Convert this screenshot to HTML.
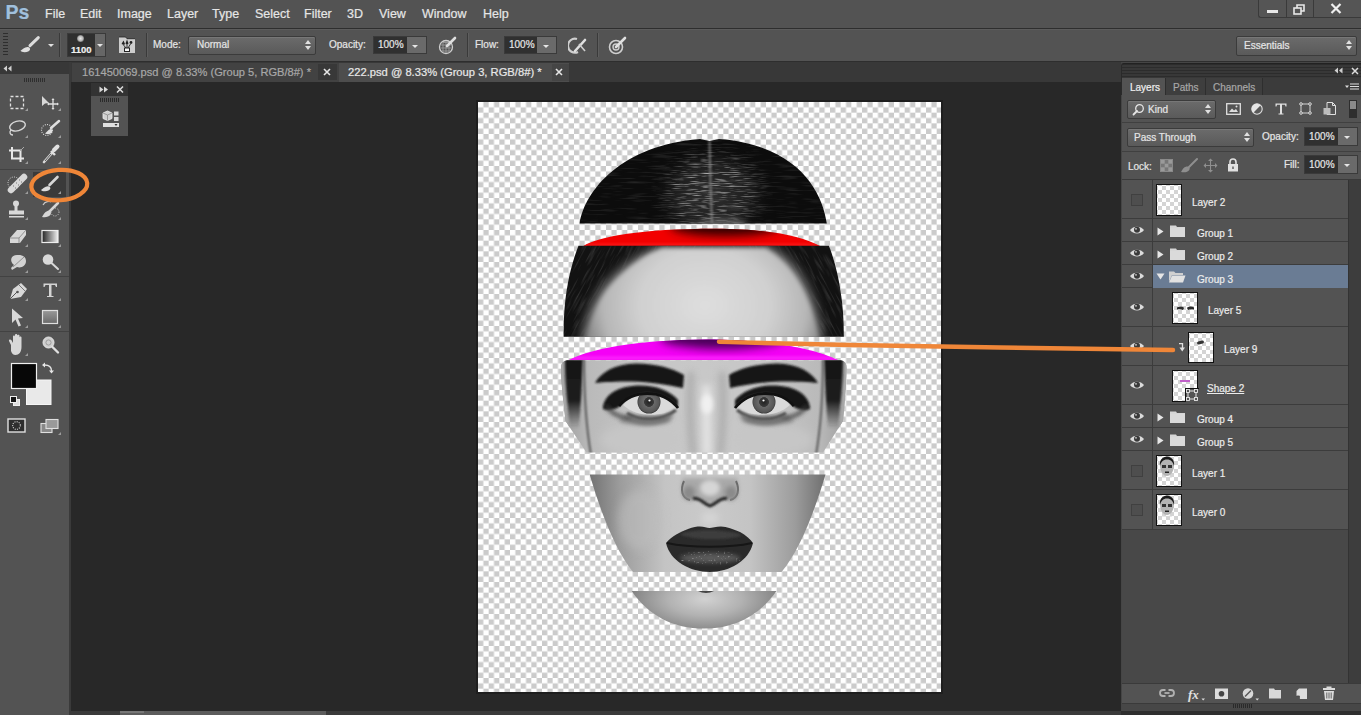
<!DOCTYPE html>
<html><head><meta charset="utf-8">
<style>
*{margin:0;padding:0;box-sizing:border-box}
html,body{width:1361px;height:715px;overflow:hidden;background:#282828;font-family:"Liberation Sans",sans-serif;color:#e8e8e8;position:relative}
.a{position:absolute}
.t{position:absolute;white-space:nowrap;line-height:1;-webkit-text-stroke:0.2px currentColor}
#menubar{left:0;top:0;width:1361px;height:29px;background:#535353;border-bottom:1px solid #2e2e2e}
#opts{left:0;top:29px;width:1361px;height:33px;background:#535353;border-bottom:1px solid #2e2e2e;border-top:1px solid #5c5c5c}
#tools{left:0;top:62px;width:69px;height:653px;background:#535353}
#toolshead{left:0;top:62px;width:69px;height:12px;background:#383838}
#tabbar{left:70px;top:62px;width:1051px;height:20px;background:#383838}
#panel{left:1121px;top:62px;width:240px;height:653px;background:#454545}
.opt{font-size:10px;color:#e6e6e6}
.dd{background:linear-gradient(#6b6b6b,#5a5a5a);border:1px solid #3b3b3b;border-radius:2px;box-shadow:inset 0 1px 0 #777}
.arr{width:7px;height:11px;background:linear-gradient(#e0e0e0,#e0e0e0) no-repeat;background:none}
.arr:before{content:"";position:absolute;left:0;top:0;border-left:3.5px solid transparent;border-right:3.5px solid transparent;border-bottom:4px solid #e0e0e0}
.arr:after{content:"";position:absolute;left:0;top:6px;border-left:3.5px solid transparent;border-right:3.5px solid transparent;border-top:4px solid #e0e0e0}
.numbox{height:18px;background:linear-gradient(90deg,#303030 0,#303030 calc(100% - 19px),#6a6a6a calc(100% - 19px));border:1px solid #3a3a3a}
.dda{width:0;height:0;border-left:3.5px solid transparent;border-right:3.5px solid transparent;border-top:3.5px solid #e6e6e6}
.lname{font-size:10px;color:#ececec}
.thumb{border:1px solid #111;background-color:#fff;background-image:conic-gradient(#d4d4d4 25%,#fff 0 50%,#d4d4d4 0 75%,#fff 0);background-size:8px 8px;background-position:1px 1px}
.menu{font-size:12.5px;color:#e6e6e6;top:8px}
</style></head>
<body>
<div id="menubar" class="a"></div>
<div id="opts" class="a"></div>
<div id="tools" class="a"></div>
<div id="toolshead" class="a"></div>
<div id="tabbar" class="a"></div>
<div id="panel" class="a"></div>

<!-- menu -->
<div class="t" style="left:5.5px;top:3px;font-size:19.5px;font-weight:bold;color:#a2c0dc;text-shadow:0 0 1px #3a5a7a">Ps</div>
<div class="t menu" style="left:45px">File</div>
<div class="t menu" style="left:80px">Edit</div>
<div class="t menu" style="left:117px">Image</div>
<div class="t menu" style="left:167px">Layer</div>
<div class="t menu" style="left:212px">Type</div>
<div class="t menu" style="left:255px">Select</div>
<div class="t menu" style="left:304px">Filter</div>
<div class="t menu" style="left:347px">3D</div>
<div class="t menu" style="left:379px">View</div>
<div class="t menu" style="left:422px">Window</div>
<div class="t menu" style="left:483px">Help</div>


<!-- options bar -->
<div class="a" style="left:3px;top:33px;width:5px;height:23px;background:repeating-linear-gradient(#2e2e2e 0 1px,transparent 1px 3px)"></div>
<svg class="a" style="left:14px;top:32px" width="30" height="24" viewBox="14 32 30 24">
<path d="M30 45.6 L38.3 37.6" stroke="#dcdcdc" stroke-width="3" stroke-linecap="round"/>
<path d="M20.5 50.8 C22 49.5 24.5 47.5 27.5 47 C29 46.8 30.2 47.8 30 49.5 C29.5 51.5 27 52.3 24.5 52.2 C22.5 52.1 21 51.6 20.5 50.8Z" fill="#e0e0e0"/>
</svg>
<div class="a" style="left:48px;top:44px;width:0;height:0;border-left:3px solid transparent;border-right:3px solid transparent;border-top:3px solid #e0e0e0"></div>
<div class="a" style="left:59px;top:33px;width:1px;height:24px;background:#3a3a3a;box-shadow:1px 0 0 #5e5e5e"></div>
<div class="a" style="left:67px;top:33px;width:39px;height:24px;background:#2f2f2f;border:1px solid #3a3a3a"></div>
<div class="a" style="left:95px;top:34px;width:10px;height:22px;background:#666"></div>
<div class="a" style="left:97px;top:44px;width:0;height:0;border-left:3px solid transparent;border-right:3px solid transparent;border-top:3px solid #e6e6e6"></div>
<div class="a" style="left:77px;top:35px;width:7px;height:7px;border-radius:50%;background:radial-gradient(#e8e8e8 0,#bbb 45%,rgba(80,80,80,0) 100%)"></div>
<div class="t" style="left:71px;top:45px;font-size:9.5px;font-weight:bold;color:#f0f0f0">1100</div>
<svg class="a" style="left:118px;top:36px" width="18" height="18" viewBox="0 0 18 18">
<path d="M1 1 H7.5 L9 2.7 H17 V17 H1Z" fill="#cdcdcd"/>
<path d="M1 1 H7.5 L9 2.7 H17" fill="none" stroke="#222" stroke-width="0.8"/>
<path d="M3.5 8 L5.5 4.5 L7 8 L6 9Z M7.5 7.5 L9 3.5 L10.5 7.5 L9 9Z" fill="#222"/>
<circle cx="13" cy="6.5" r="1.4" fill="#222"/>
<path d="M5.5 9 L8 12 M9 9 V12 M12.5 8 L10 12" stroke="#333" stroke-width="1"/>
<rect x="6.5" y="12" width="5" height="3.5" fill="#f4f4f4" stroke="#222" stroke-width="1"/>
</svg>
<div class="a" style="left:146px;top:33px;width:1px;height:24px;background:#3a3a3a;box-shadow:1px 0 0 #5e5e5e"></div>
<div class="t opt" style="left:153px;top:40px">Mode:</div>
<div class="a dd" style="left:188px;top:36px;width:128px;height:19px"></div>
<div class="t opt" style="left:197px;top:40px">Normal</div>
<div class="a arr" style="left:305px;top:40px"></div>
<div class="t opt" style="left:329px;top:40px">Opacity:</div>
<div class="a numbox" style="left:373px;top:36px;width:54px"></div>
<div class="t opt" style="left:378px;top:40px">100%</div>
<div class="a dda" style="left:412px;top:45px"></div>
<svg class="a" style="left:438px;top:35px" width="20" height="20" viewBox="0 0 20 20">
<circle cx="8" cy="12" r="6.5" fill="none" stroke="#cfcfcf" stroke-width="1.3"/>
<path d="M3 10 L13 10 M2.5 13 L13.5 13 M5 7.5 L11 7.5 M4 16 L12 16 M5 7 L5 17 M8 6 L8 18 M11 7 L11 17" stroke="#9a9a9a" stroke-width="0.9"/>
<path d="M9 11 L17 3" stroke="#dedede" stroke-width="2.6" stroke-linecap="round"/>
</svg>
<div class="a" style="left:467px;top:33px;width:1px;height:24px;background:#3a3a3a;box-shadow:1px 0 0 #5e5e5e"></div>
<div class="t opt" style="left:475px;top:40px">Flow:</div>
<div class="a numbox" style="left:504px;top:36px;width:53px"></div>
<div class="t opt" style="left:509px;top:40px">100%</div>
<div class="a dda" style="left:543px;top:45px"></div>
<svg class="a" style="left:568px;top:35px" width="22" height="20" viewBox="0 0 22 20">
<path d="M9 4 A7 7 0 1 0 10 17" fill="none" stroke="#cfcfcf" stroke-width="2.2"/>
<path d="M7 16 L17 5" stroke="#e0e0e0" stroke-width="2.6" stroke-linecap="round"/>
<path d="M11 9 L17 16" stroke="#cfcfcf" stroke-width="1.6"/>
</svg>
<div class="a" style="left:597px;top:33px;width:1px;height:24px;background:#3a3a3a;box-shadow:1px 0 0 #5e5e5e"></div>
<svg class="a" style="left:607px;top:35px" width="22" height="20" viewBox="0 0 22 20">
<circle cx="9" cy="12" r="6.5" fill="none" stroke="#cfcfcf" stroke-width="1.6"/>
<circle cx="9" cy="12" r="3" fill="none" stroke="#cfcfcf" stroke-width="1.4"/>
<path d="M9 12 L18 3" stroke="#e0e0e0" stroke-width="2.6" stroke-linecap="round"/>
</svg>
<div class="a dd" style="left:1236px;top:36px;width:121px;height:20px"></div>
<div class="t opt" style="left:1244px;top:41px">Essentials</div>
<div class="a arr" style="left:1346px;top:40px"></div>
<!-- window buttons -->
<div class="a" style="left:1258px;top:0;width:103px;height:18px;background:#555;border-left:1px solid #3a3a3a;border-bottom:1px solid #3a3a3a;border-radius:0 0 0 3px"></div>
<div class="a" style="left:1286px;top:0;width:1px;height:18px;background:#3a3a3a"></div>
<div class="a" style="left:1313px;top:0;width:1px;height:18px;background:#3a3a3a"></div>
<div class="a" style="left:1267px;top:10px;width:11px;height:3px;background:#e8e8e8"></div>
<svg class="a" style="left:1293px;top:4px" width="14" height="11" viewBox="0 0 14 11"><rect x="1" y="4" width="7" height="6" fill="none" stroke="#e8e8e8" stroke-width="1.6"/><path d="M4 4 V1 H11 V7 H8" fill="none" stroke="#e8e8e8" stroke-width="1.6"/></svg>
<svg class="a" style="left:1330px;top:3px" width="12" height="11" viewBox="0 0 12 11"><path d="M1.5 1 L10.5 10 M10.5 1 L1.5 10" stroke="#efefef" stroke-width="2.2"/></svg>

<!-- tab bar -->
<div class="a" style="left:72px;top:63px;width:267px;height:19px;background:#424242"></div>
<div class="t" style="left:82px;top:67px;font-size:11.1px;color:#a8a8a8">161450069.psd @ 8.33% (Group 5, RGB/8#) *</div>
<div class="a" style="left:318px;top:64px;width:19px;height:16px;background:#383838"></div>
<svg class="a" style="left:323px;top:68px" width="8" height="8" viewBox="0 0 8 8"><path d="M1 1L7 7M7 1L1 7" stroke="#e6e6e6" stroke-width="1.6"/></svg>
<div class="a" style="left:339px;top:63px;width:230px;height:19px;background:#4d4d4d"></div>
<div class="t" style="left:348px;top:67px;font-size:11.2px;color:#e8e8e8">222.psd @ 8.33% (Group 3, RGB/8#) *</div>
<div class="a" style="left:552px;top:64px;width:17px;height:17px;background:#454545"></div><svg class="a" style="left:555px;top:68px" width="8" height="8" viewBox="0 0 8 8"><path d="M1 1L7 7M7 1L1 7" stroke="#e6e6e6" stroke-width="1.6"/></svg>


<!-- tools panel -->
<div class="a" style="left:69px;top:62px;width:2px;height:653px;background:#3a3a3a"></div>
<svg class="a" style="left:3px;top:65px" width="9" height="7" viewBox="0 0 9 7"><path d="M4 0.5 L0.5 3.5 L4 6.5Z M8.5 0.5 L5 3.5 L8.5 6.5Z" fill="#d0d0d0"/></svg>
<div class="a" style="left:24px;top:78px;width:21px;height:4px;background:repeating-linear-gradient(90deg,#2e2e2e 0 1px,transparent 1px 2px)"></div>
<div class="a" style="left:33px;top:172px;width:33px;height:25px;background:#3a3a3a"></div>
<svg class="a" style="left:0;top:85px" width="69" height="360" viewBox="0 85 69 360">
<g fill="#9c9c9c">
<path d="M28 108 L28 111 L25 111Z"/><path d="M61 108 L61 111 L58 111Z"/>
<path d="M28 135 L28 138 L25 138Z"/><path d="M61 135 L61 138 L58 138Z"/>
<path d="M28 161 L28 164 L25 164Z"/><path d="M61 161 L61 164 L58 164Z"/>
<path d="M28 191 L28 194 L25 194Z"/><path d="M61 191 L61 194 L58 194Z"/>
<path d="M28 217 L28 220 L25 220Z"/><path d="M61 217 L61 220 L58 220Z"/>
<path d="M28 244 L28 247 L25 247Z"/><path d="M61 244 L61 247 L58 247Z"/>
<path d="M28 270 L28 273 L25 273Z"/><path d="M61 270 L61 273 L58 273Z"/>
<path d="M28 298 L28 301 L25 301Z"/><path d="M61 298 L61 301 L58 301Z"/>
<path d="M28 325 L28 328 L25 328Z"/><path d="M61 325 L61 328 L58 328Z"/>
<path d="M28 353 L28 356 L25 356Z"/>
<path d="M61 432 L61 435 L58 435Z"/>
</g>
<!-- marquee -->
<rect x="10.5" y="96.5" width="13" height="12" fill="none" stroke="#e0e0e0" stroke-width="1.3" stroke-dasharray="3 2"/>
<!-- move -->
<path d="M42 96 L42 106 L45 103.5 L49 103 Z" fill="#d8d8d8"/>
<path d="M53 99 V109 M48 104 H58" stroke="#e0e0e0" stroke-width="1.3"/>
<path d="M53 98 L51.5 100 H54.5Z M53 110 L51.5 108 H54.5Z M47 104 L49 102.5 V105.5Z M59 104 L57 102.5 V105.5Z" fill="#e0e0e0"/>
<!-- lasso -->
<ellipse cx="17.5" cy="126" rx="8" ry="4.8" transform="rotate(-15 17.5 126)" fill="none" stroke="#d8d8d8" stroke-width="1.4"/>
<path d="M11 130 C9 132 10 135 13 135" fill="none" stroke="#d8d8d8" stroke-width="1.3"/>
<!-- quick select -->
<circle cx="47" cy="130" r="5.5" fill="none" stroke="#d8d8d8" stroke-width="1.1" stroke-dasharray="1 1.3"/>
<path d="M51 128 L59 121" stroke="#e0e0e0" stroke-width="2.5" stroke-linecap="round"/>
<path d="M45 133.5 C47 132 48 129.5 50.5 129 C52.5 129 53 131 52 132.5 C50 134.5 47.5 134.5 45 133.5Z" fill="#e0e0e0"/>
<!-- crop -->
<path d="M12 147 V158.5 H24 M9 150.5 H20.5 V162" fill="none" stroke="#e6e6e6" stroke-width="2"/>
<path d="M20 151 L24 147" stroke="#aaa" stroke-width="1"/>
<!-- eyedropper -->
<path d="M44 162 L52 153" stroke="#d8d8d8" stroke-width="2.6" stroke-linecap="round"/>
<path d="M45 161 L51 154" stroke="#555" stroke-width="1"/>
<path d="M51 151 L55 155" stroke="#e0e0e0" stroke-width="2.4"/>
<path d="M54 150 L57.5 146.5" stroke="#e0e0e0" stroke-width="4" stroke-linecap="round"/>
<!-- separator -->
<rect x="0" y="169" width="69" height="1" fill="#424242"/>
<!-- healing -->
<circle cx="14" cy="183" r="6" fill="none" stroke="#d8d8d8" stroke-width="1" stroke-dasharray="1 1.3"/>
<path d="M11 190 L24 177" stroke="#d8d8d8" stroke-width="6.5" stroke-linecap="round"/>
<path d="M13 186 h1 M16 183 h1 M19 180 h1 M15 188 h1 M18 185 h1 M21 182 h1" stroke="#777" stroke-width="1"/>
<!-- brush selected -->
<path d="M49.5 185 L57.5 177" stroke="#d6d6d6" stroke-width="2.6" stroke-linecap="round"/>
<path d="M41 190 C42.5 188.7 45 186.6 47.8 186.2 C49.3 186 50.5 187 50.3 188.6 C49.8 190.6 47.3 191.4 44.8 191.3 C42.8 191.2 41.5 190.8 41 190Z" fill="#dcdcdc"/>
<!-- stamp -->
<circle cx="16" cy="203.5" r="3" fill="#d8d8d8"/>
<rect x="14.5" y="205" width="3" height="6" fill="#d8d8d8"/>
<rect x="9" y="210.5" width="15" height="4" fill="#d8d8d8"/>
<rect x="9" y="216" width="15" height="1.5" fill="#d8d8d8"/>
<!-- history brush -->
<path d="M43 205 C45 201 50 201 51 202" fill="none" stroke="#ccc" stroke-width="1.2"/>
<path d="M49 212 L58 203" stroke="#d6d6d6" stroke-width="2.5" stroke-linecap="round"/>
<path d="M42 217 C43.5 214.5 44.5 212 47.5 211 C50 210.3 51.8 212.3 50.6 214.6 C49 217 45.5 217.6 42 217Z" fill="#d6d6d6"/>
<circle cx="55" cy="212" r="4" fill="none" stroke="#ccc" stroke-width="1" stroke-dasharray="1 1.3"/>
<!-- eraser -->
<path d="M10 238 L17 230 H26 L26 235 L20 243 H10Z" fill="#d8d8d8"/>
<path d="M10 238 H19 L26 230 M19 238 V243" stroke="#8a8a8a" stroke-width="0.9" fill="none"/>
<!-- gradient -->
<defs><linearGradient id="gr" x1="0" x2="1"><stop offset="0" stop-color="#222"/><stop offset="1" stop-color="#f0f0f0"/></linearGradient>
<linearGradient id="gr2" x1="0" x2="0" y1="0" y2="1"><stop offset="0" stop-color="#999"/><stop offset="1" stop-color="#6a6a6a"/></linearGradient></defs>
<rect x="42" y="230.5" width="16" height="12" fill="url(#gr)" stroke="#eee" stroke-width="1.2"/>
<!-- blur -->
<path d="M17 255 C23 254.5 26 257 26 261 C26 266 21 268.5 17 267 L12 270 L11 268 L14 265 C9 261 11 255 17 255Z" fill="#d2d2d2"/>
<path d="M13 267 L24 257" stroke="#888" stroke-width="0.9"/>
<!-- dodge -->
<circle cx="48" cy="259.5" r="5.3" fill="#d8d8d8"/>
<path d="M51.5 263 L58 269" stroke="#d8d8d8" stroke-width="2" stroke-linecap="round"/>
<rect x="0" y="276" width="69" height="1" fill="#424242"/>
<!-- pen -->
<path d="M10 299 L13 289 L21 283 L27 289 L21 297Z" fill="#d8d8d8"/>
<path d="M10 299 L17 292" stroke="#555" stroke-width="1"/>
<circle cx="17.5" cy="292" r="1.3" fill="#555"/>
<path d="M19 285 L25 291" stroke="#777" stroke-width="1"/>
<!-- type -->
<path d="M43.5 283.5 H57 V287 H56 L55 285 H51.5 V296 H53.5 V297 H47 V296 H49 V285 H45.5 L44.5 287 H43.5Z" fill="#d4d4d4"/>
<!-- path select -->
<path d="M12 308.5 L12 323 L15.5 319.5 L18.5 326.5 L21 325.5 L18 318.5 L23 318 Z" fill="#d8d8d8"/>
<!-- rect -->
<rect x="42.5" y="310.5" width="15" height="13" fill="url(#gr2)" stroke="#e0e0e0" stroke-width="1.2"/>
<rect x="0" y="331" width="69" height="1" fill="#424242"/>
<!-- hand -->
<path d="M11 345 L9 341 C8.5 339.5 10.5 338.8 11.5 340.3 L13 343 V336.5 C13 335 15 335 15 336.5 V342 V335 C15 333.5 17.3 333.5 17.3 335 V342 V335.8 C17.3 334.5 19.5 334.5 19.5 335.8 V342 V337.5 C19.5 336 21.5 336 21.5 337.5 V347 C21.5 352 19 355 15.5 355 C13 355 12 353.5 11 351Z" fill="#d8d8d8"/>
<!-- zoom -->
<circle cx="48.5" cy="342.5" r="5.5" fill="#cfcfcf" stroke="#e6e6e6" stroke-width="1"/>
<circle cx="48.5" cy="342.5" r="2.6" fill="none" stroke="#9c9c9c" stroke-width="1"/>
<path d="M52.5 347 L58 352.5" stroke="#e0e0e0" stroke-width="2.4" stroke-linecap="round"/>
<!-- colors -->
<rect x="26.5" y="380" width="24.5" height="24.5" fill="#e9e9e9" stroke="#f5f5f5" stroke-width="1"/>
<rect x="11.5" y="363.5" width="25" height="25" fill="#070707" stroke="#f0f0f0" stroke-width="1.2"/>
<path d="M44.5 365 C49 365 51.5 367 51.5 371" fill="none" stroke="#e6e6e6" stroke-width="1.3"/>
<path d="M42 365 L45 362.5 V367.5Z M51.5 373.5 L49 370.5 H54Z" fill="#e6e6e6"/>
<rect x="13.5" y="399.5" width="6" height="6" fill="#ddd" stroke="#eee" stroke-width="1"/>
<rect x="10.5" y="396.5" width="6" height="6" fill="#151515" stroke="#eee" stroke-width="1"/>
<!-- quick mask -->
<rect x="8" y="419" width="17" height="13" fill="#2e2e2e" stroke="#e0e0e0" stroke-width="1.4"/>
<circle cx="16.5" cy="425.5" r="3.8" fill="none" stroke="#e0e0e0" stroke-width="1.1" stroke-dasharray="1 1.2"/>
<!-- screen mode -->
<rect x="41" y="423.5" width="11" height="9" fill="#888" stroke="#e0e0e0" stroke-width="1.1"/>
<rect x="46" y="419.5" width="12" height="9" fill="#9a9a9a" stroke="#e0e0e0" stroke-width="1.1"/>
</svg>
<!-- orange ellipse -->
<svg class="a" style="left:25px;top:163px" width="70" height="45" viewBox="25 163 70 45">
<ellipse cx="59.3" cy="185.1" rx="28" ry="15.2" transform="rotate(-4 59.3 185.1)" fill="none" stroke="#ef8638" stroke-width="4.2"/>
</svg>


<!-- right panel -->
<div class="a" style="left:1121px;top:63px;width:240px;height:15px;background:repeating-linear-gradient(#2c2c2c 0 1px,#383838 1px 3px);border-top:1px solid #222;border-left:1px solid #2a2a2a;border-radius:3px 0 0 0"></div>
<svg class="a" style="left:1334px;top:67px" width="9" height="7" viewBox="0 0 9 7"><path d="M4 0.5 L0.5 3.5 L4 6.5Z M8.5 0.5 L5 3.5 L8.5 6.5Z" fill="#cfcfcf"/></svg>
<svg class="a" style="left:1351px;top:67px" width="8" height="8" viewBox="0 0 8 8"><path d="M1 1L7 7M7 1L1 7" stroke="#dcdcdc" stroke-width="1.5"/></svg>
<div class="a" style="left:1121px;top:78px;width:240px;height:17px;background:#3b3b3b;border-left:1px solid #2a2a2a"></div>
<div class="a" style="left:1122px;top:78px;width:43px;height:17px;background:#535353"></div>
<div class="a" style="left:1165px;top:78px;width:41px;height:17px;background:#3e3e3e;border-left:1px solid #2e2e2e;border-right:1px solid #2e2e2e"></div>
<div class="a" style="left:1206px;top:78px;width:57px;height:17px;background:#3e3e3e;border-right:1px solid #2e2e2e"></div>
<div class="t" style="left:1130px;top:82.5px;font-size:10px;color:#f0f0f0">Layers</div>
<div class="t" style="left:1173px;top:82.5px;font-size:10px;color:#a8a8a8">Paths</div>
<div class="t" style="left:1213px;top:82.5px;font-size:10px;color:#a8a8a8">Channels</div>
<svg class="a" style="left:1345px;top:83px" width="14" height="8" viewBox="0 0 14 8"><path d="M0 2.5 H4 L2 5Z" fill="#ddd"/><path d="M5 1 H14 M5 3.5 H14 M5 6 H14" stroke="#ddd" stroke-width="1.1"/></svg>
<div class="a" style="left:1122px;top:95px;width:239px;height:620px;background:#535353"></div>
<!-- filter row -->
<div class="a dd" style="left:1127px;top:100px;width:89px;height:19px"></div>
<svg class="a" style="left:1132px;top:103px" width="13" height="13" viewBox="0 0 13 13"><circle cx="7.5" cy="5.5" r="3.8" fill="none" stroke="#e6e6e6" stroke-width="1.3"/><path d="M5 8 L1.5 11.5" stroke="#e6e6e6" stroke-width="1.8" stroke-linecap="round"/></svg>
<div class="t opt" style="left:1148px;top:105px">Kind</div>
<div class="a arr" style="left:1205px;top:104px"></div>
<svg class="a" style="left:1226px;top:103px" width="15" height="12" viewBox="0 0 15 12"><rect x="0.7" y="0.7" width="13.6" height="10.6" fill="none" stroke="#e0e0e0" stroke-width="1.3"/><path d="M3 9 L6 5.5 L8 7.5 L10 6 L12 9Z" fill="#e0e0e0"/><circle cx="10.5" cy="3.5" r="1" fill="#e0e0e0"/></svg>
<svg class="a" style="left:1251px;top:103px" width="12" height="12" viewBox="0 0 12 12"><circle cx="6" cy="6" r="5.2" fill="#5a5a5a" stroke="#e0e0e0" stroke-width="1.1"/><path d="M6 0.8 A5.2 5.2 0 0 0 2.3 9.7 L9.7 2.3 A5.2 5.2 0 0 0 6 0.8Z" fill="#e6e6e6"/></svg>
<svg class="a" style="left:1275px;top:103px" width="12" height="12" viewBox="0 0 12 12"><path d="M0.5 0.5 H11.5 V3.5 H10.5 L10 1.7 H7 V10.5 H8.5 V11.5 H3.5 V10.5 H5 V1.7 H2 L1.5 3.5 H0.5Z" fill="#e0e0e0"/></svg>
<svg class="a" style="left:1299px;top:102px" width="13" height="13" viewBox="0 0 13 13"><rect x="2" y="2" width="9" height="9" fill="none" stroke="#e0e0e0" stroke-width="0.9"/><g fill="#535353" stroke="#e6e6e6" stroke-width="0.9"><circle cx="2" cy="2" r="1.3"/><circle cx="11" cy="2" r="1.3"/><circle cx="2" cy="11" r="1.3"/><circle cx="11" cy="11" r="1.3"/></g></svg>
<svg class="a" style="left:1323px;top:102px" width="13" height="13" viewBox="0 0 13 13"><path d="M4 0.5 H9.5 L12.5 3.5 V12.5 H4Z" fill="none" stroke="#e0e0e0" stroke-width="1"/><path d="M9.5 0.5 V3.5 H12.5" fill="none" stroke="#e0e0e0" stroke-width="1"/><rect x="0.5" y="6" width="7" height="6.5" fill="#bdbdbd"/></svg>
<div class="a" style="left:1349px;top:100px;width:8px;height:18px;background:linear-gradient(#8a8a8a 0,#8a8a8a 50%,#2e2e2e 50%);border:1px solid #2e2e2e"></div>
<div class="a" style="left:1122px;top:122px;width:239px;height:1px;background:#404040"></div>
<!-- blend row -->
<div class="a dd" style="left:1127px;top:128px;width:127px;height:19px"></div>
<div class="t opt" style="left:1134px;top:133px">Pass Through</div>
<div class="a arr" style="left:1244px;top:132px"></div>
<div class="t opt" style="left:1262px;top:132px">Opacity:</div>
<div class="a numbox" style="left:1304px;top:127px;width:54px;height:19px"></div>
<div class="t opt" style="left:1309px;top:132px">100%</div>
<div class="a dda" style="left:1344px;top:136px"></div>
<div class="a" style="left:1122px;top:151px;width:239px;height:1px;background:#404040"></div>
<!-- lock row -->
<div class="t opt" style="left:1128px;top:161.5px">Lock:</div>
<svg class="a" style="left:1160px;top:159px" width="13" height="13" viewBox="0 0 13 13"><rect x="0.5" y="0.5" width="12" height="12" fill="#777" stroke="#8a8a8a"/><g fill="#9a9a9a"><rect x="1" y="1" width="3.7" height="3.7"/><rect x="8.3" y="1" width="3.7" height="3.7"/><rect x="4.7" y="4.7" width="3.7" height="3.7"/><rect x="1" y="8.3" width="3.7" height="3.7"/><rect x="8.3" y="8.3" width="3.7" height="3.7"/></g></svg>
<svg class="a" style="left:1180px;top:157px" width="18" height="16" viewBox="0 0 18 16"><path d="M8 11 L17 2" stroke="#8f8f8f" stroke-width="2" stroke-linecap="round"/><path d="M1 15 C2.5 12.5 3.5 10 6.5 9.5 C9 9 10.5 10.8 9.3 13 C7.7 15.3 4.5 15.7 1 15Z" fill="#8f8f8f"/></svg>
<svg class="a" style="left:1203px;top:158px" width="15" height="15" viewBox="0 0 15 15"><path d="M7.5 1.5 V13.5 M1.5 7.5 H13.5" stroke="#8f8f8f" stroke-width="1.1"/><path d="M7.5 0.5 L5 3 H10Z M7.5 14.5 L5 12 H10Z M0.5 7.5 L3 5 V10Z M14.5 7.5 L12 5 V10Z" fill="#8f8f8f"/></svg>
<svg class="a" style="left:1227px;top:158px" width="12" height="14" viewBox="0 0 12 14"><path d="M3 6 V4 A3 3 0 0 1 9 4 V6" fill="none" stroke="#e0e0e0" stroke-width="1.6"/><rect x="1" y="6" width="10" height="7.5" fill="#e0e0e0"/><rect x="5.3" y="8.5" width="1.4" height="2.5" fill="#555"/></svg>
<div class="t opt" style="left:1284px;top:160px">Fill:</div>
<div class="a numbox" style="left:1304px;top:155px;width:54px;height:19px"></div>
<div class="t opt" style="left:1309px;top:160px">100%</div>
<div class="a dda" style="left:1344px;top:164px"></div>
<div class="a" style="left:1122px;top:179px;width:239px;height:1px;background:#3a3a3a"></div>


<!-- layer rows -->
<div class="a" style="left:1122px;top:530px;width:226px;height:153px;background:#484848"></div>
<div class="a" style="left:1348px;top:180px;width:13px;height:503px;background:#3d3d3d;border-left:1px solid #333"></div>
<div class="a" style="left:1122px;top:180px;width:226px;height:39px;background:#535353;border-bottom:1px solid #3c3c3c"></div>
<div class="a" style="left:1152px;top:180px;width:1px;height:39px;background:#3c3c3c"></div>
<div class="a" style="left:1131px;top:193.5px;width:12px;height:12px;border:1px solid #404040;background:#4e4e4e"></div>
<div class="a thumb chk" style="left:1156px;top:184.0px;width:26px;height:32px"></div>
<div class="t lname" style="left:1192px;top:197.8px;">Layer 2</div>
<div class="a" style="left:1122px;top:219px;width:226px;height:23px;background:#535353;border-bottom:1px solid #3c3c3c"></div>
<div class="a" style="left:1152px;top:219px;width:1px;height:23px;background:#3c3c3c"></div>
<svg class="a" style="left:1129px;top:225.0px" width="16" height="10" viewBox="0 0 16 10"><path d="M1 5 C4 0.5 12 0.5 15 5 C12 9.5 4 9.5 1 5Z" fill="#dcdcdc"/><circle cx="8" cy="4.8" r="3" fill="#3a3a3a"/><circle cx="7" cy="3.8" r="0.9" fill="#ccc"/></svg>
<svg class="a" style="left:1157px;top:226.5px" width="7" height="9" viewBox="0 0 7 9"><path d="M0.5 0.5 V8.5 L6.5 4.5Z" fill="#e6e6e6"/></svg>
<svg class="a" style="left:1170px;top:224.5px" width="15" height="12" viewBox="0 0 15 12"><path d="M0 0.5 H6 L7 2 H15 V12 H0Z" fill="#d6d6d6"/><rect x="0" y="3" width="15" height="9" fill="#dadada"/></svg>
<div class="t lname" style="left:1197px;top:228.8px;">Group 1</div>
<div class="a" style="left:1122px;top:242px;width:226px;height:23px;background:#535353;border-bottom:1px solid #3c3c3c"></div>
<div class="a" style="left:1152px;top:242px;width:1px;height:23px;background:#3c3c3c"></div>
<svg class="a" style="left:1129px;top:248.0px" width="16" height="10" viewBox="0 0 16 10"><path d="M1 5 C4 0.5 12 0.5 15 5 C12 9.5 4 9.5 1 5Z" fill="#dcdcdc"/><circle cx="8" cy="4.8" r="3" fill="#3a3a3a"/><circle cx="7" cy="3.8" r="0.9" fill="#ccc"/></svg>
<svg class="a" style="left:1157px;top:249.5px" width="7" height="9" viewBox="0 0 7 9"><path d="M0.5 0.5 V8.5 L6.5 4.5Z" fill="#e6e6e6"/></svg>
<svg class="a" style="left:1170px;top:247.5px" width="15" height="12" viewBox="0 0 15 12"><path d="M0 0.5 H6 L7 2 H15 V12 H0Z" fill="#d6d6d6"/><rect x="0" y="3" width="15" height="9" fill="#dadada"/></svg>
<div class="t lname" style="left:1197px;top:251.8px;">Group 2</div>
<div class="a" style="left:1122px;top:265px;width:226px;height:23px;background:#535353;border-bottom:1px solid #3c3c3c"></div>
<div class="a" style="left:1153px;top:265px;width:195px;height:23px;background:#6a7c94"></div>
<div class="a" style="left:1152px;top:265px;width:1px;height:23px;background:#3c3c3c"></div>
<svg class="a" style="left:1129px;top:271.0px" width="16" height="10" viewBox="0 0 16 10"><path d="M1 5 C4 0.5 12 0.5 15 5 C12 9.5 4 9.5 1 5Z" fill="#dcdcdc"/><circle cx="8" cy="4.8" r="3" fill="#3a3a3a"/><circle cx="7" cy="3.8" r="0.9" fill="#ccc"/></svg>
<svg class="a" style="left:1156px;top:272.5px" width="9" height="7" viewBox="0 0 9 7"><path d="M0.5 0.5 H8.5 L4.5 6.5Z" fill="#e6e6e6"/></svg>
<svg class="a" style="left:1168px;top:270.0px" width="18" height="13" viewBox="0 0 18 13"><path d="M1 1.5 H6 L7.5 3 H15 V5 H4 L1 12Z" fill="#d0d0d0"/><path d="M4 5.5 H17.5 L15 12.5 H1Z" fill="#e2e2e2"/></svg>
<div class="t lname" style="left:1197px;top:274.8px;">Group 3</div>
<div class="a" style="left:1122px;top:288px;width:226px;height:39px;background:#535353;border-bottom:1px solid #3c3c3c"></div>
<div class="a" style="left:1152px;top:288px;width:1px;height:39px;background:#3c3c3c"></div>
<svg class="a" style="left:1129px;top:302.0px" width="16" height="10" viewBox="0 0 16 10"><path d="M1 5 C4 0.5 12 0.5 15 5 C12 9.5 4 9.5 1 5Z" fill="#dcdcdc"/><circle cx="8" cy="4.8" r="3" fill="#3a3a3a"/><circle cx="7" cy="3.8" r="0.9" fill="#ccc"/></svg>
<div class="a thumb l5" style="left:1172px;top:292.0px;width:26px;height:32px"></div><svg class="a" style="left:1176px;top:305px" width="19" height="6" viewBox="0 0 19 6"><path d="M1 2.5 C3 1 7 1 8 3 L7 5 C5 4 3 4 1 4.5Z M18 2.5 C16 1 12 1 11 3 L12 5 C14 4 16 4 18 4.5Z" fill="#2a2a2a"/></svg>
<div class="t lname" style="left:1208px;top:305.8px;">Layer 5</div>
<div class="a" style="left:1122px;top:327px;width:226px;height:39px;background:#535353;border-bottom:1px solid #3c3c3c"></div>
<div class="a" style="left:1152px;top:327px;width:1px;height:39px;background:#3c3c3c"></div>
<svg class="a" style="left:1129px;top:341.0px" width="16" height="10" viewBox="0 0 16 10"><path d="M1 5 C4 0.5 12 0.5 15 5 C12 9.5 4 9.5 1 5Z" fill="#dcdcdc"/><circle cx="8" cy="4.8" r="3" fill="#3a3a3a"/><circle cx="7" cy="3.8" r="0.9" fill="#ccc"/></svg>
<div class="a thumb l9" style="left:1188px;top:331.5px;width:26px;height:31px"></div><div class="a" style="left:1197px;top:341px;width:7px;height:3px;background:#333;border-radius:2px;transform:rotate(-15deg)"></div><svg class="a" style="left:1177px;top:343px" width="8" height="9" viewBox="0 0 8 9"><path d="M2 0.5 H5.5 V5" fill="none" stroke="#e0e0e0" stroke-width="1.3"/><path d="M2.5 4.5 H8 L5.2 8.5Z" fill="#e0e0e0"/></svg>
<div class="t lname" style="left:1224px;top:344.8px;">Layer 9</div>
<div class="a" style="left:1122px;top:366px;width:226px;height:39px;background:#535353;border-bottom:1px solid #3c3c3c"></div>
<div class="a" style="left:1152px;top:366px;width:1px;height:39px;background:#3c3c3c"></div>
<svg class="a" style="left:1129px;top:380.0px" width="16" height="10" viewBox="0 0 16 10"><path d="M1 5 C4 0.5 12 0.5 15 5 C12 9.5 4 9.5 1 5Z" fill="#dcdcdc"/><circle cx="8" cy="4.8" r="3" fill="#3a3a3a"/><circle cx="7" cy="3.8" r="0.9" fill="#ccc"/></svg>
<div class="a thumb shape" style="left:1172px;top:370.0px;width:26px;height:32px"></div><div class="a" style="left:1180px;top:380px;width:10px;height:1.5px;background:#c060c8"></div><div class="a" style="left:1185px;top:388px;width:14px;height:14px;background:#535353;border-left:1px solid #111;border-top:1px solid #111"></div><svg class="a" style="left:1186px;top:389px" width="12" height="12" viewBox="0 0 12 12"><rect x="2" y="2" width="8" height="8" fill="none" stroke="#e6e6e6" stroke-width="1"/><g fill="#535353" stroke="#e6e6e6" stroke-width="0.9"><rect x="0.5" y="0.5" width="3" height="3"/><rect x="8.5" y="0.5" width="3" height="3"/><rect x="0.5" y="8.5" width="3" height="3"/><rect x="8.5" y="8.5" width="3" height="3"/></g></svg>
<div class="t lname" style="left:1207px;top:383.8px;text-decoration:underline">Shape 2</div>
<div class="a" style="left:1122px;top:405px;width:226px;height:23px;background:#535353;border-bottom:1px solid #3c3c3c"></div>
<div class="a" style="left:1152px;top:405px;width:1px;height:23px;background:#3c3c3c"></div>
<svg class="a" style="left:1129px;top:411.0px" width="16" height="10" viewBox="0 0 16 10"><path d="M1 5 C4 0.5 12 0.5 15 5 C12 9.5 4 9.5 1 5Z" fill="#dcdcdc"/><circle cx="8" cy="4.8" r="3" fill="#3a3a3a"/><circle cx="7" cy="3.8" r="0.9" fill="#ccc"/></svg>
<svg class="a" style="left:1157px;top:412.5px" width="7" height="9" viewBox="0 0 7 9"><path d="M0.5 0.5 V8.5 L6.5 4.5Z" fill="#e6e6e6"/></svg>
<svg class="a" style="left:1170px;top:410.5px" width="15" height="12" viewBox="0 0 15 12"><path d="M0 0.5 H6 L7 2 H15 V12 H0Z" fill="#d6d6d6"/><rect x="0" y="3" width="15" height="9" fill="#dadada"/></svg>
<div class="t lname" style="left:1197px;top:414.8px;">Group 4</div>
<div class="a" style="left:1122px;top:428px;width:226px;height:23px;background:#535353;border-bottom:1px solid #3c3c3c"></div>
<div class="a" style="left:1152px;top:428px;width:1px;height:23px;background:#3c3c3c"></div>
<svg class="a" style="left:1129px;top:434.0px" width="16" height="10" viewBox="0 0 16 10"><path d="M1 5 C4 0.5 12 0.5 15 5 C12 9.5 4 9.5 1 5Z" fill="#dcdcdc"/><circle cx="8" cy="4.8" r="3" fill="#3a3a3a"/><circle cx="7" cy="3.8" r="0.9" fill="#ccc"/></svg>
<svg class="a" style="left:1157px;top:435.5px" width="7" height="9" viewBox="0 0 7 9"><path d="M0.5 0.5 V8.5 L6.5 4.5Z" fill="#e6e6e6"/></svg>
<svg class="a" style="left:1170px;top:433.5px" width="15" height="12" viewBox="0 0 15 12"><path d="M0 0.5 H6 L7 2 H15 V12 H0Z" fill="#d6d6d6"/><rect x="0" y="3" width="15" height="9" fill="#dadada"/></svg>
<div class="t lname" style="left:1197px;top:437.8px;">Group 5</div>
<div class="a" style="left:1122px;top:451px;width:226px;height:39px;background:#535353;border-bottom:1px solid #3c3c3c"></div>
<div class="a" style="left:1152px;top:451px;width:1px;height:39px;background:#3c3c3c"></div>
<div class="a" style="left:1131px;top:464.5px;width:12px;height:12px;border:1px solid #404040;background:#4e4e4e"></div>
<div class="a thumb face" style="left:1156px;top:455.0px;width:26px;height:32px"></div><svg class="a" style="left:1157px;top:456px" width="24" height="29" viewBox="0 0 24 29"><path d="M3 9 C3 3 7 1 10 1 C13 1 17 3 17 9 C17 15 14 20 10 20 C6 20 3 15 3 9Z" fill="#b4b4b4"/><path d="M3 10 C2 4 6 0.5 10 0.5 C14 0.5 18 4 17 10 C16 6 14 3.5 10 3.5 C6 3.5 4 6 3 10Z" fill="#1a1a1a"/><path d="M5 9 H9 V12 H5Z M11 9 H15 V12 H11Z" fill="#333"/><path d="M8 15.5 H12 V17 H8Z" fill="#222"/><path d="M6 19 C8 22 12 22 14 19 L15 22 L5 22Z" fill="#d8d8d8" opacity="0.6"/></svg>
<div class="t lname" style="left:1192px;top:468.8px;">Layer 1</div>
<div class="a" style="left:1122px;top:490px;width:226px;height:40px;background:#535353;border-bottom:1px solid #3c3c3c"></div>
<div class="a" style="left:1152px;top:490px;width:1px;height:40px;background:#3c3c3c"></div>
<div class="a" style="left:1131px;top:504.0px;width:12px;height:12px;border:1px solid #404040;background:#4e4e4e"></div>
<div class="a thumb face" style="left:1156px;top:494.0px;width:26px;height:32px"></div><svg class="a" style="left:1157px;top:495px" width="24" height="29" viewBox="0 0 24 29"><path d="M3 9 C3 3 7 1 10 1 C13 1 17 3 17 9 C17 15 14 20 10 20 C6 20 3 15 3 9Z" fill="#b4b4b4"/><path d="M3 10 C2 4 6 0.5 10 0.5 C14 0.5 18 4 17 10 C16 6 14 3.5 10 3.5 C6 3.5 4 6 3 10Z" fill="#1a1a1a"/><path d="M5 9 H9 V12 H5Z M11 9 H15 V12 H11Z" fill="#333"/><path d="M8 15.5 H12 V17 H8Z" fill="#222"/><path d="M6 19 C8 22 12 22 14 19 L15 22 L5 22Z" fill="#d8d8d8" opacity="0.6"/></svg>
<div class="t lname" style="left:1192px;top:508.3px;">Layer 0</div>

<!-- mini panel -->
<div class="a" style="left:91px;top:83px;width:37px;height:13px;background:#333"></div>
<svg class="a" style="left:99px;top:86px" width="10" height="7" viewBox="0 0 10 7"><path d="M0.5 0.5 L4.5 3.5 L0.5 6.5Z M5 0.5 L9 3.5 L5 6.5Z" fill="#d8d8d8"/></svg>
<svg class="a" style="left:116px;top:86px" width="8" height="7" viewBox="0 0 8 7"><path d="M1 0.5L7 6.5M7 0.5L1 6.5" stroke="#dcdcdc" stroke-width="1.5"/></svg>
<div class="a" style="left:91px;top:96px;width:37px;height:40px;background:#535353"></div>
<div class="a" style="left:100px;top:98px;width:19px;height:4px;background:repeating-linear-gradient(90deg,#2a2a2a 0 1px,transparent 1px 2px)"></div>
<svg class="a" style="left:102px;top:110px" width="18" height="18" viewBox="0 0 18 18">
<path d="M5.5 1 L10 3 V8.5 L5.5 10.5 L1 8.5 V3Z" fill="#d0d0d0" stroke="#eee" stroke-width="0.8"/>
<path d="M1 3 L5.5 5 L10 3 M5.5 5 V10.5" stroke="#888" stroke-width="0.8" fill="none"/>
<rect x="12" y="1.5" width="4.5" height="4" fill="#d6d6d6"/><rect x="12" y="7" width="4.5" height="4" fill="#d6d6d6"/>
<rect x="1" y="13" width="16" height="4" fill="#e0e0e0"/><path d="M12.5 14 H15.5 L14 16Z" fill="#333"/>
</svg>

<!-- panel bottom -->
<div class="a" style="left:1122px;top:683px;width:239px;height:20px;background:#535353;border-top:1px solid #3a3a3a"></div>
<div class="a" style="left:1122px;top:703px;width:239px;height:8px;background:#474747;border-top:1px solid #3a3a3a"></div>
<div class="a" style="left:1233px;top:704px;width:19px;height:4px;background:repeating-linear-gradient(90deg,#2a2a2a 0 1px,transparent 1px 2px)"></div>
<div class="a" style="left:1121px;top:711px;width:240px;height:4px;background:#2e2e2e"></div>
<svg class="a" style="left:1155px;top:685px" width="185" height="17" viewBox="1155 685 185 17">
<g fill="none" stroke="#b0b0b0" stroke-width="1.8"><path d="M1165.5 690 H1163 A3 3 0 0 0 1163 696 H1165.5"/><path d="M1168.5 690 H1171 A3 3 0 0 1 1171 696 H1168.5"/><path d="M1164.5 693 H1169.5"/></g>
<text x="1188" y="698.5" font-family="Liberation Serif" font-style="italic" font-weight="bold" font-size="13" fill="#e0e0e0">fx</text>
<path d="M1201.5 698.5 H1205 L1203.2 700.5Z" fill="#ddd"/>
<rect x="1215" y="688.5" width="13" height="10.5" fill="#dcdcdc"/><circle cx="1221.5" cy="693.7" r="2.8" fill="#444"/>
<circle cx="1248" cy="693.5" r="5.3" fill="#d8d8d8"/><path d="M1245 696.5 L1251 690.5" stroke="#555" stroke-width="1.4"/>
<path d="M1255.5 698.5 H1259 L1257.2 700.5Z" fill="#ddd"/>
<path d="M1269 688.5 H1274 L1275 690 H1281 V698.5 H1269Z" fill="#d8d8d8"/>
<path d="M1296.5 691 L1299 688.5 H1307 V699 H1299 V696 H1296.5Z" fill="#dcdcdc"/><path d="M1296.5 696 H1299.5 V699" fill="none" stroke="#444" stroke-width="0.8"/>
<rect x="1323" y="688" width="12" height="2" fill="#dcdcdc"/><rect x="1326.5" y="686.5" width="5" height="2" fill="#dcdcdc"/>
<path d="M1324 691 H1334 L1333 700 H1325Z" fill="#dcdcdc"/><path d="M1326.8 692.5 V698.5 M1329 692.5 V698.5 M1331.2 692.5 V698.5" stroke="#555" stroke-width="0.9"/>
</svg>

<!-- h scrollbar -->
<div class="a" style="left:71px;top:711px;width:1050px;height:4px;background:#3a3a3a"></div>
<div class="a" style="left:120px;top:711px;width:206px;height:4px;background:#5c5c5c"></div>
<div class="a" style="left:120px;top:711px;width:24px;height:2px;background:#777"></div>

<!-- canvas -->
<div class="a" style="left:476px;top:100px;width:467px;height:594px;background:#1e1e1e"></div>
<svg class="a" style="left:478px;top:102px" width="463" height="590" viewBox="478 102 463 590">
<defs>
<pattern id="chk" x="478" y="102" width="10.6667" height="10.6667" patternUnits="userSpaceOnUse">
<rect width="10.6667" height="10.6667" fill="#fff"/>
<rect x="5.3333" width="5.3333" height="5.3333" fill="#cbcbcb"/>
<rect y="5.3333" width="5.3333" height="5.3333" fill="#cbcbcb"/>
</pattern>
<filter id="b05" filterUnits="userSpaceOnUse" x="470" y="95" width="480" height="605"><feGaussianBlur stdDeviation="0.6"/></filter>
<filter id="b1" filterUnits="userSpaceOnUse" x="470" y="95" width="480" height="605"><feGaussianBlur stdDeviation="1"/></filter>
<filter id="b2" filterUnits="userSpaceOnUse" x="470" y="95" width="480" height="605"><feGaussianBlur stdDeviation="2"/></filter>
<filter id="b3" filterUnits="userSpaceOnUse" x="470" y="95" width="480" height="605"><feGaussianBlur stdDeviation="3"/></filter>
<filter id="b4" filterUnits="userSpaceOnUse" x="470" y="95" width="480" height="605"><feGaussianBlur stdDeviation="5"/></filter>
<filter id="b8" filterUnits="userSpaceOnUse" x="470" y="95" width="480" height="605"><feGaussianBlur stdDeviation="9"/></filter>
<filter id="hairTex" x="0" y="0" width="100%" height="100%">
<feTurbulence type="fractalNoise" baseFrequency="0.12 0.7" numOctaves="2" seed="7" result="n"/>
<feColorMatrix in="n" type="matrix" values="0 0 0 0 0.85  0 0 0 0 0.85  0 0 0 0 0.85  4 0 0 0 -2.3" result="c"/>
<feComposite in="c" in2="SourceGraphic" operator="in"/>
</filter>
<filter id="hairTex3" filterUnits="userSpaceOnUse" x="670" y="545" width="80" height="25">
<feTurbulence type="fractalNoise" baseFrequency="0.5 0.5" numOctaves="1" seed="5" result="n"/>
<feColorMatrix in="n" type="matrix" values="0 0 0 0 0.75  0 0 0 0 0.75  0 0 0 0 0.75  5 0 0 0 -3.2" result="c"/>
<feComposite in="c" in2="SourceGraphic" operator="in"/>
</filter>
<filter id="hairTex4" x="0" y="0" width="100%" height="100%" filterUnits="objectBoundingBox">
<feTurbulence type="fractalNoise" baseFrequency="0.04 0.5" numOctaves="2" seed="3" result="n"/>
<feColorMatrix in="n" type="matrix" values="0 0 0 0 0.7  0 0 0 0 0.7  0 0 0 0 0.7  2.2 0 0 0 -1.1" result="c"/>
<feGaussianBlur in="c" stdDeviation="0.4"/>
</filter>
<filter id="hairTex2" x="0" y="0" width="100%" height="100%" filterUnits="objectBoundingBox">
<feTurbulence type="fractalNoise" baseFrequency="0.07 1.1" numOctaves="2" seed="11" result="n"/>
<feColorMatrix in="n" type="matrix" values="0 0 0 0 0.8  0 0 0 0 0.8  0 0 0 0 0.8  2.6 0 0 0 -1.35" result="c"/>
<feGaussianBlur in="c" stdDeviation="0.35"/>
</filter>
<radialGradient id="redg" cx="718" cy="228" r="125" gradientUnits="userSpaceOnUse" gradientTransform="translate(718 228) scale(1 0.3) translate(-718 -228)">
<stop offset="0" stop-color="#380000"/><stop offset="0.18" stop-color="#780000"/><stop offset="0.42" stop-color="#d80000"/><stop offset="0.7" stop-color="#f80000"/><stop offset="1" stop-color="#ff1414"/></radialGradient>
<radialGradient id="magg" cx="712" cy="338" r="135" gradientUnits="userSpaceOnUse" gradientTransform="translate(712 338) scale(1 0.3) translate(-712 -338)">
<stop offset="0" stop-color="#50005c"/><stop offset="0.22" stop-color="#8a009a"/><stop offset="0.48" stop-color="#d800e0"/><stop offset="0.75" stop-color="#fa00fc"/><stop offset="1" stop-color="#ff20ff"/></radialGradient>
<radialGradient id="foreg" cx="705" cy="305" r="120" gradientUnits="userSpaceOnUse" gradientTransform="translate(705 305) scale(1 0.85) translate(-705 -305)">
<stop offset="0" stop-color="#dedede"/><stop offset="0.55" stop-color="#d0d0d0"/><stop offset="0.85" stop-color="#b6b6b6"/><stop offset="1" stop-color="#8c8c8c"/></radialGradient>
<linearGradient id="skin1" x1="561" x2="847" y1="0" y2="0" gradientUnits="userSpaceOnUse">
<stop offset="0" stop-color="#9e9e9e"/><stop offset="0.1" stop-color="#bababa"/><stop offset="0.3" stop-color="#c6c6c6"/><stop offset="0.5" stop-color="#c8c8c8"/><stop offset="0.7" stop-color="#c6c6c6"/><stop offset="0.9" stop-color="#bababa"/><stop offset="1" stop-color="#9e9e9e"/></linearGradient>
<linearGradient id="skin2" x1="589" x2="826" y1="0" y2="0" gradientUnits="userSpaceOnUse">
<stop offset="0" stop-color="#727272"/><stop offset="0.13" stop-color="#9c9c9c"/><stop offset="0.32" stop-color="#c4c4c4"/><stop offset="0.5" stop-color="#cacaca"/><stop offset="0.68" stop-color="#c4c4c4"/><stop offset="0.87" stop-color="#9c9c9c"/><stop offset="1" stop-color="#6e6e6e"/></linearGradient>
<radialGradient id="ching" cx="705" cy="599" r="82" gradientUnits="userSpaceOnUse" gradientTransform="translate(705 599) scale(1 0.45) translate(-705 -599)">
<stop offset="0" stop-color="#d2d2d2"/><stop offset="0.45" stop-color="#b2b2b2"/><stop offset="0.8" stop-color="#8e8e8e"/><stop offset="1" stop-color="#767676"/></radialGradient>
<radialGradient id="irisg" cx="0.5" cy="0.5" r="0.5"><stop offset="0" stop-color="#222"/><stop offset="0.4" stop-color="#3a3a3a"/><stop offset="0.45" stop-color="#6a6a6a"/><stop offset="0.9" stop-color="#555"/><stop offset="1" stop-color="#333"/></radialGradient>
<clipPath id="cpHair"><path d="M579.6 223.4 C585 190 622 145 700 139 L709.5 141 L719 139 C797 145 822 190 826.8 223.4Z"/></clipPath>
<clipPath id="cpFore"><path d="M578.5 245.7 L829 245.7 C838 270 844 300 843.8 336.8 L563.7 336.8 C563 300 569 270 578.5 245.7Z"/></clipPath>
<clipPath id="cpEye"><path d="M567 360.3 L841 360.3 Q846.5 361 846.5 368 C846 390 844 410 843 421 L823 452.5 L586.4 452.5 L565.5 421 C564 405 561 385 561 368 Q561 361 567 360.3Z"/></clipPath>
<clipPath id="cpNose"><path d="M589.7 474.6 L825.5 474.6 C815 510 800 550 781.5 572 L633 572 C615 550 600 510 589.7 474.6Z"/></clipPath>
</defs>
<rect x="478" y="102" width="463" height="590" fill="url(#chk)"/>

<!-- slice 1: hair dome -->
<radialGradient id="hmg" cx="712" cy="192" r="62" gradientUnits="userSpaceOnUse" gradientTransform="translate(712 192) scale(1 0.85) translate(-712 -192)"><stop offset="0" stop-color="#fff"/><stop offset="0.5" stop-color="#bbb"/><stop offset="1" stop-color="#000"/></radialGradient><radialGradient id="hglow" cx="712" cy="195" r="62" gradientUnits="userSpaceOnUse" gradientTransform="translate(712 195) scale(1 0.85) translate(-712 -195)"><stop offset="0" stop-color="#2e2e2e"/><stop offset="0.6" stop-color="#1e1e1e"/><stop offset="1" stop-color="#0c0c0c" stop-opacity="0"/></radialGradient><mask id="hm" maskUnits="userSpaceOnUse" x="570" y="130" width="270" height="100"><rect x="570" y="130" width="270" height="100" fill="url(#hmg)"/></mask>
<mask id="fm" maskUnits="userSpaceOnUse" x="555" y="240" width="300" height="100"><rect x="555" y="240" width="300" height="100" fill="#888"/></mask>
<g clip-path="url(#cpHair)">
<rect x="575" y="135" width="256" height="90" fill="#0c0c0c"/>
<rect x="575" y="135" width="256" height="90" fill="url(#hglow)"/>
<g opacity="0.15"><rect x="575" y="135" width="256" height="90" fill="#fff" filter="url(#hairTex4)"/></g>
<g mask="url(#hm)"><rect x="575" y="135" width="256" height="90" fill="#fff" filter="url(#hairTex2)" opacity="0.9"/></g>
<path d="M709.5 141 C710 170 711 200 712 223" stroke="#8a8a8a" stroke-width="2" filter="url(#b1)" opacity="0.8"/>
<ellipse cx="722" cy="225" rx="26" ry="6" fill="#8a8a8a" filter="url(#b3)" opacity="0.6"/>
</g>

<!-- red band -->
<clipPath id="cpRed"><path d="M583 246.3 C600 236 640 229 715 228.8 C770 229 800 236 820.5 246.3Z"/></clipPath>
<g clip-path="url(#cpRed)">
<rect x="580" y="225" width="245" height="23" fill="#f20000"/>
<ellipse cx="725" cy="226" rx="55" ry="10" fill="#300000" filter="url(#b4)"/>
<rect x="580" y="243" width="245" height="4" fill="#ff1a1a" opacity="0.6" filter="url(#b1)"/>
</g>

<!-- slice 2: forehead -->
<g clip-path="url(#cpFore)">
<rect x="560" y="245" width="290" height="93" fill="#121212"/>
<g opacity="0.22" transform="rotate(-62 600 300)"><rect x="520" y="200" width="180" height="200" fill="#fff" filter="url(#hairTex4)"/></g>
<g opacity="0.22" transform="rotate(62 810 300)"><rect x="720" y="200" width="180" height="200" fill="#fff" filter="url(#hairTex4)"/></g>
<path d="M580 342 C584 316 592 296 607 280 C624 262 642 250 658 246 L772 246 C798 260 818 290 824 342Z" fill="#6a6a6a" filter="url(#b4)"/>
<path d="M586 342 C590 318 598 298 612 283 C628 266 645 254 662 248 L766 248 C790 262 812 290 819 342Z" fill="url(#foreg)" filter="url(#b2)"/>
</g>

<!-- magenta band -->
<clipPath id="cpMag"><path d="M569 360 C590 349 635 340 706 339.5 C775 340 815 349 838 360Z"/></clipPath>
<g clip-path="url(#cpMag)">
<rect x="565" y="337" width="275" height="25" fill="#f400f6"/>
<ellipse cx="722" cy="338" rx="62" ry="11" fill="#4a0058" filter="url(#b4)"/>
<rect x="565" y="356" width="275" height="4" fill="#ff30ff" opacity="0.6" filter="url(#b1)"/>
</g>

<!-- slice 3: eyes -->
<g clip-path="url(#cpEye)">
<rect x="555" y="355" width="300" height="100" fill="url(#skin1)"/>
<ellipse cx="640" cy="440" rx="40" ry="16" fill="#c6c6c6" filter="url(#b4)"/>
<ellipse cx="773" cy="440" rx="40" ry="16" fill="#c6c6c6" filter="url(#b4)"/>
<path d="M691 372 C689 400 690 430 693 455" stroke="#a4a4a4" stroke-width="7" fill="none" filter="url(#b3)" opacity="0.7"/>
<path d="M722 372 C724 400 723 430 720 455" stroke="#a4a4a4" stroke-width="7" fill="none" filter="url(#b3)" opacity="0.7"/>
<path d="M706.5 385 C706 410 707 435 707 455" stroke="#e2e2e2" stroke-width="9" fill="none" filter="url(#b3)"/>
<ellipse cx="707" cy="404" rx="6" ry="10" fill="#f0f0f0" filter="url(#b2)"/>
<path d="M556 356 L556 440 L570 430 C566 400 563 380 563 356Z" fill="#a8a8a8"/>
<path d="M852 356 L852 440 L838 430 C842 400 845 380 845 356Z" fill="#a8a8a8"/>
<linearGradient id="hairFade" x1="0" y1="356" x2="0" y2="430" gradientUnits="userSpaceOnUse"><stop offset="0" stop-color="#151515"/><stop offset="0.6" stop-color="#1e1e1e"/><stop offset="1" stop-color="#3a3a3a" stop-opacity="0"/></linearGradient><path d="M565 358 L583 358 C582 380 581 405 579 428 L570 428 C567 400 565 380 565 358Z" fill="url(#hairFade)" filter="url(#b1)"/>
<path d="M843 358 L824 358 C825 380 826 405 828 428 L838 428 C841 400 843 380 843 358Z" fill="url(#hairFade)" filter="url(#b1)"/>
<path d="M584 358 C584 390 585 420 591 455" stroke="#5a5a5a" stroke-width="2" fill="none" filter="url(#b1)"/>
<path d="M823 358 C823 390 822 420 816 455" stroke="#5a5a5a" stroke-width="2" fill="none" filter="url(#b1)"/>
<!-- brows -->
<g id="browL"><path d="M595 383 C601 372 615 364 636 363.5 C657 364 672 368 684 375 L683 388 C668 385 650 382 632 381.5 C616 381.5 604 382 595 383Z" fill="#181818" filter="url(#b1)"/>
</g>
<use href="#browL" transform="translate(1413 0) scale(-1 1)"/>
<!-- eyes -->
<g id="eyeL">
<ellipse cx="645" cy="420" rx="26" ry="5" fill="#8a8a8a" filter="url(#b2)"/>
<path d="M603 409 C603 397 614 388 632 386 C652 384 668 389 678 400 L678 408 C662 389 633 389 619 407 C614 410 608 411 603 409Z" fill="#161616" filter="url(#b1)"/>
<path d="M606 406 C612 414 622 418 632 418" stroke="#3a3a3a" stroke-width="3" fill="none" filter="url(#b2)"/>
<path d="M623 405 C633 392 660 389 677 408 C662 417 637 418 623 405Z" fill="#dadada"/>
<clipPath id="eyeClipL"><path d="M623 405 C633 392 660 389 677 408 C662 417 637 418 623 405Z"/></clipPath>
<g clip-path="url(#eyeClipL)"><circle cx="649" cy="402" r="11.5" fill="url(#irisg)"/></g>
<circle cx="649.5" cy="400.5" r="1.1" fill="#fff"/>
<path d="M619 406 C632 390 662 388 678 408" fill="none" stroke="#111" stroke-width="2.8"/>
<path d="M627 413 C641 422 662 421 676 410" fill="none" stroke="#4a4a4a" stroke-width="3" filter="url(#b1)"/>
<path d="M630 418 C642 425 660 424 672 415" stroke="#6a6a6a" stroke-width="4" fill="none" filter="url(#b2)"/>
</g>
<use href="#eyeL" transform="translate(1413 0) scale(-1 1)"/>
</g>

<!-- slice 4: nose + lips -->
<g clip-path="url(#cpNose)">
<rect x="585" y="470" width="245" height="105" fill="url(#skin2)"/>
<ellipse cx="640" cy="520" rx="22" ry="30" fill="#bdbdbd" filter="url(#b4)" opacity="0.6"/>
<path d="M683 478 C680 488 681 498 690 500 C694 501 697 499 699 498 C703 505 716 506 721 498 C724 499 727 501 731 500 C739 498 740 488 737 478Z" fill="#a8a8a8" filter="url(#b2)"/>
<ellipse cx="710" cy="488" rx="10" ry="8" fill="#d6d6d6" filter="url(#b2)"/>
<path d="M684 481 C680 490 682 498 690 500" stroke="#6a6a6a" stroke-width="2" fill="none" filter="url(#b05)"/>
<path d="M736 481 C740 490 738 498 730 500" stroke="#6a6a6a" stroke-width="2" fill="none" filter="url(#b05)"/>
<ellipse cx="689" cy="493" rx="6" ry="7" fill="#8a8a8a" filter="url(#b2)"/><ellipse cx="731" cy="493" rx="6" ry="7" fill="#8a8a8a" filter="url(#b2)"/>
<path d="M693 498.5 C700 497 703 503.5 710 506 C717 503.5 720 497 727 498.5" fill="none" stroke="#262626" stroke-width="3.2" filter="url(#b1)"/>
<ellipse cx="710" cy="518" rx="9" ry="6" fill="#d4d4d4" filter="url(#b3)"/>
<path d="M666 543 C672 536 680 532 688 529 C693 527 697 526.5 700 526.5 C704 526.5 707 528 709.5 528 C712 528 716 526.5 721 526.5 C727 526.5 733 529 740 532 C746 535 750 539 753 543 C749 561 729 572 710 572 C690 572 670 561 666 543Z" fill="#2c2c2c" filter="url(#b05)"/>
<path d="M680 534 C695 529 725 529 742 535 C735 540 690 541 680 534Z" fill="#3e3e3e" filter="url(#b1)"/>
<path d="M667 543 C690 548 730 548 752 543" fill="none" stroke="#161616" stroke-width="2"/>
<ellipse cx="710" cy="558" rx="30" ry="5" fill="#5a5a5a" filter="url(#b2)"/>
<g opacity="0.55" filter="url(#hairTex3)"><ellipse cx="710" cy="558" rx="32" ry="7" fill="#fff"/></g>
</g>

<!-- slice 5: chin -->
<path d="M631.7 590.9 L776.5 590.9 C760 615 735 628.6 704 628.6 C673 628.6 648 615 631.7 590.9Z" fill="url(#ching)"/>
<path d="M698 591 Q706 595 714 591Z" fill="#444" filter="url(#b05)"/>

<!-- orange line -->
<path d="M719 341.8 C760 343 800 344 850 345 C900 346 950 346.5 1000 347.5 C1060 348.5 1120 349.5 1173 350" fill="none" stroke="#ef8638" stroke-width="4.5" stroke-linecap="round"/>
</svg>
<svg class="a" style="left:941px;top:330px" width="240" height="30" viewBox="941 330 240 30">
<path d="M930 346.3 C950 346.6 975 347 1000 347.5 C1060 348.5 1120 349.5 1173 350" fill="none" stroke="#ef8638" stroke-width="4.5" stroke-linecap="round"/>
</svg>
</body></html>
